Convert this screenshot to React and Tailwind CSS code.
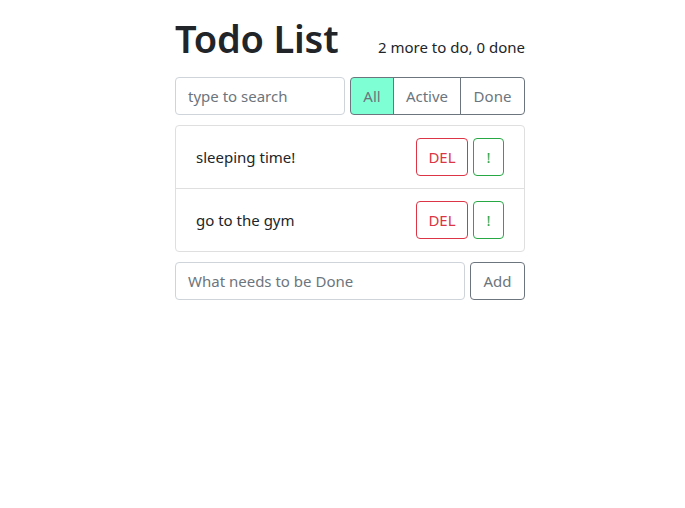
import { useState } from 'react';

const todos = [
  { id: 1, label: 'sleeping time!' },
  { id: 2, label: 'go to the gym' }
];

const filters = ['All', 'Active', 'Done'];

export default function App() {
  const [filter, setFilter] = useState('All');

  return (
    <div className="flex min-h-[508px] justify-center bg-white pl-[15px] font-['Noto_Sans',sans-serif] text-[#212529]">
      <div className="w-[350px]">
        <header className="flex items-baseline justify-between pt-[13px]">
          <h1 className="text-[38px] leading-[50px] font-semibold tracking-[-0.2px]">Todo List</h1>
          <p className="text-[15px] text-[#212529]">2 more to do, 0 done</p>
        </header>

        <div className="mt-[14px] flex gap-[5px]">
          <input
            className="h-[38px] w-[170px] rounded border border-[#ced4da] px-3 text-[15px] placeholder:text-[#6c757d] focus:outline-none"
            placeholder="type to search"
            type="text"
          />
          <div className="flex flex-1">
            {filters.map((name, index) => (
              <button
                className={`h-[38px] border border-[#6c757d] text-[15px] text-[#6c757d] ${
                  index === 0 ? 'w-[44px] rounded-l' : index === 1 ? 'w-[68px] -ml-px' : 'flex-1 -ml-px rounded-r'
                } ${filter === name ? 'bg-[#7fffd4]' : 'bg-white'}`}
                key={name}
                onClick={() => setFilter(name)}
                type="button"
              >
                {name}
              </button>
            ))}
          </div>
        </div>

        <ul className="mt-[10px] rounded border border-[#dfdfdf]">
          {todos.map((todo, index) => (
            <li
              className={`flex h-[62px] items-center justify-between pr-5 pl-5 ${index > 0 ? 'border-t border-[#dfdfdf] h-[63px]' : ''}`}
              key={todo.id}
            >
              <span className="text-[15px]">{todo.label}</span>
              <div className="flex gap-[5px]">
                <button
                  className="h-[38px] w-[52px] rounded border border-[#dc3545] text-[15px] text-[#dc3545]"
                  type="button"
                >
                  DEL
                </button>
                <button
                  className="h-[38px] w-[31px] rounded border border-[#28a745] text-[15px] text-[#28a745]"
                  type="button"
                >
                  !
                </button>
              </div>
            </li>
          ))}
        </ul>

        <form className="mt-[10px] flex gap-[5px]" onSubmit={(event) => event.preventDefault()}>
          <input
            className="h-[38px] w-[290px] rounded border border-[#ced4da] px-3 text-[15px] placeholder:text-[#6c757d] focus:outline-none"
            placeholder="What needs to be Done"
            type="text"
          />
          <button
            className="h-[38px] flex-1 rounded border border-[#6c757d] text-[15px] text-[#6c757d]"
            type="submit"
          >
            Add
          </button>
        </form>
      </div>
    </div>
  );
}
